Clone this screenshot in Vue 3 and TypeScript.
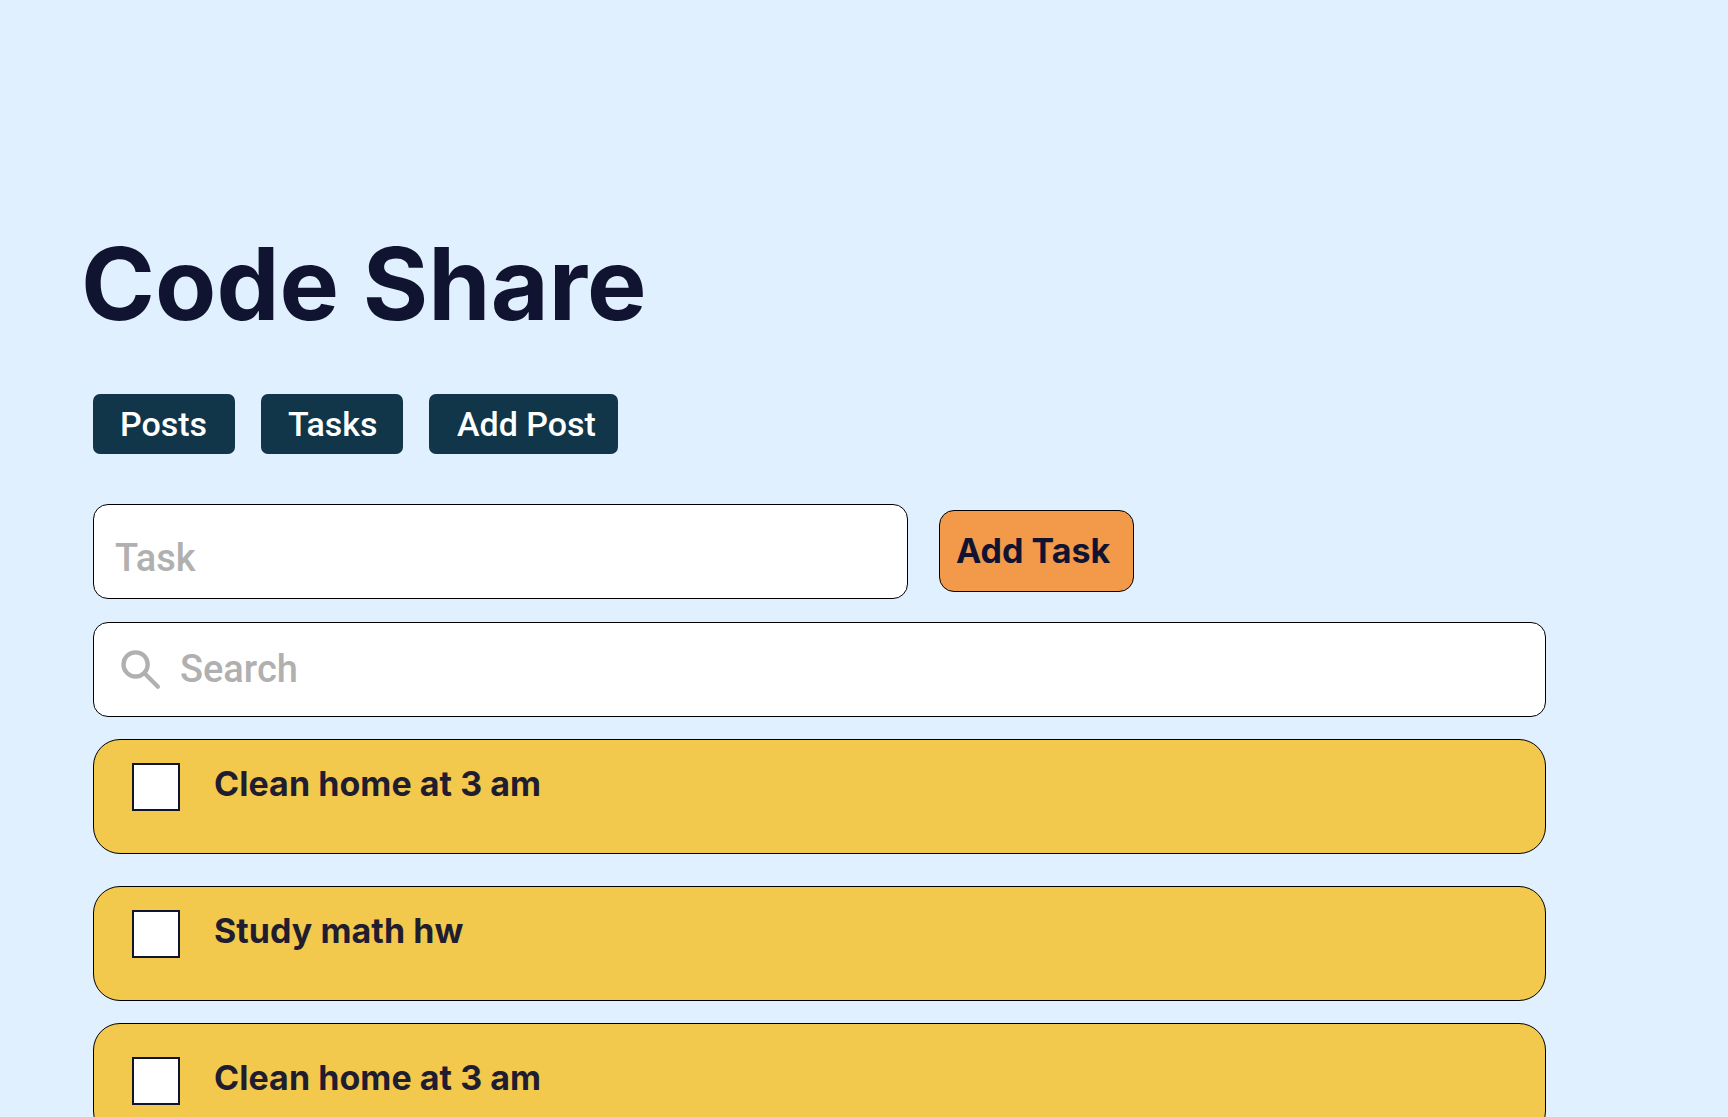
<script setup lang="ts">
const tabs: string[] = ['Posts', 'Tasks', 'Add Post']
const tasks: string[] = ['Clean home at 3 am', 'Study math hw', 'Clean home at 3 am']
</script>

<template>
  <main class="page">
    <h1>Code Share</h1>
    <nav>
      <button v-for="t in tabs" :key="t" :class="{ wide: t === 'Add Post' }">{{ t }}</button>
    </nav>
    <div class="row">
      <div class="field task">Task</div>
      <button class="add">Add Task</button>
    </div>
    <div class="field search">
      <svg width="40" height="40" viewBox="0 0 40 40" fill="none" stroke="#b0b0b0" stroke-width="4.3" stroke-linecap="round">
        <circle cx="14.600" cy="14.400" r="12.100" />
        <path d="M23.500 23.300L36.900 36.700" />
      </svg>
      <span>Search</span>
    </div>
    <ul>
      <li v-for="(t, i) in tasks" :key="i">
        <span class="box"></span>
        <span class="label">{{ t }}</span>
      </li>
    </ul>
  </main>
</template>

<style>
body { background: #e0f0ff; overflow: hidden; }
</style>

<style scoped>
* { box-sizing: border-box; }
.page { height: 1117px; overflow: hidden; background: #e0f0ff; padding: 223px 0 0 93px; font-family: Inter, sans-serif; color: #111430; }
h1 { margin: 0 0 0 -12px; height: 124px; line-height: 121px; font-size: 100px; font-weight: 700; letter-spacing: 0.05px; white-space: nowrap; }
nav { display: flex; gap: 26px; margin-top: 47px; }
nav button { width: 142px; height: 60px; border: 0; border-radius: 7px; padding: 0 0 0 27px; text-align: left; background: #113549; color: #fff; font: 500 34px/60px Roboto, sans-serif; white-space: nowrap; }
nav .wide { width: 189px; padding-left: 28px; }
.row { display: flex; margin-top: 50px; gap: 31px; }
.field { height: 95px; border: 1px solid #000; border-radius: 15px; background: #fff; color: #b0b0b0; font: 500 38px/44px Roboto, sans-serif; }
.task { width: 815px; padding: 31px 21px; }
.add { width: 195px; height: 82px; margin-top: 6px; border: 1px solid #000; border-radius: 15px; background: #f2994a; color: #111430; font: 700 34px/80px Inter, sans-serif; padding: 0 0 0 16px; text-align: left; white-space: nowrap; }
.search { width: 1453px; margin-top: 23px; display: flex; padding: 24px 27px; }
.search svg { margin-top: 3px; }
.search span { margin-left: 19px; }
ul { margin: 22px 0 0; padding: 0; list-style: none; }
li { width: 1453px; height: 115px; border: 1px solid #000; border-radius: 27px; background: #f2c94c; display: flex; padding: 23px 38px; }
li:nth-child(2) { margin: 32px 0 22px; }
li:nth-child(3) { padding-top: 33px; }
.box { width: 48px; height: 48px; background: #fff; border: 2px solid #111430; }
.label { margin-left: 34px; font-size: 34px; font-weight: 700; line-height: 42px; letter-spacing: 0.05px; color: #1f1d2f; }
</style>
